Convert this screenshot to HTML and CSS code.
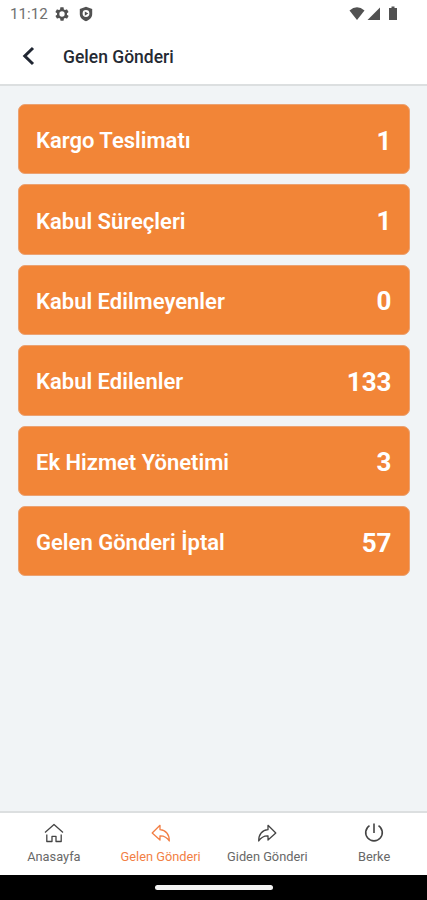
FILE: index.html
```html
<!DOCTYPE html>
<html lang="tr">
<head>
  <meta charset="UTF-8" />
  <meta name="viewport" content="width=device-width, initial-scale=1.0"/>
  <title>Gelen Gönderi</title>
  <link rel="stylesheet" href="styles.css">
</head>
<body>
  <div class="statusbar">
    <span class="time">11:12</span>
    <svg class="gear" width="16" height="16" viewBox="0 0 24 24" fill="#515151"><path fill-rule="evenodd" d="M19.4 13c.1-.3.1-.7.1-1s0-.7-.1-1l2.1-1.6c.2-.2.2-.4.1-.6l-2-3.5c-.1-.2-.4-.3-.6-.2l-2.5 1c-.5-.4-1.1-.7-1.7-1l-.4-2.6c0-.3-.2-.5-.4-.5h-4c-.3 0-.5.2-.5.4l-.4 2.7c-.6.2-1.2.6-1.7 1l-2.5-1c-.2-.1-.5 0-.6.2l-2 3.5c-.1.2-.1.5.1.6L4.600 11c0 .3-.1.7-.1 1s0 .7.1 1l-2.100 1.600c-.2.2-.2.4-.1.6l2 3.500c.1.2.4.3.6.2l2.500-1c.5.4 1.100.7 1.700 1l.4 2.600c0 .3.2.5.5.5h4c.2 0 .4-.2.4-.5l.4-2.600c.6-.3 1.200-.6 1.700-1l2.500 1c.2.1.5 0 .6-.2l2-3.500c.1-.2.1-.5-.1-.6zM12 16a4 4 0 1 1 0-8 4 4 0 0 1 0 8z"/></svg>
    <svg class="shield" width="14" height="16" viewBox="0 0 14 16"><path fill="#515151" fill-rule="evenodd" d="M7 .8 13.200 3v5c0 3.500-2.600 6-6.200 7.300C3.400 14 .8 11.500.8 8V3zM7 4.100a3.400 3.400 0 1 0 0 6.800 3.400 3.400 0 0 0 0-6.800z"/><path fill="#515151" d="m5.800 5.500 3.500 2.100-3.500 2.100z"/></svg>
    <svg class="signals" width="49" height="16" viewBox="0 0 49 16" fill="#515151"><path d="M.5 4.600Q8-2 15.500 4.600L8 14z"/><path d="M31 1.500V14H18.500z"/><path d="M42.500.500h3V2H48v12h-8V2h2.500z"/></svg>
  </div>

  <header class="topbar">
    <svg width="14" height="20" viewBox="0 0 14 20" fill="none" stroke="#202632" stroke-width="3"><path d="m12 2-8.200 8 8.200 8"/></svg>
    <h1>Gelen Gönderi</h1>
  </header>

  <main class="list">
    <div class="card"><span>Kargo Teslimatı</span><b>1</b></div>
    <div class="card"><span>Kabul Süreçleri</span><b>1</b></div>
    <div class="card"><span>Kabul Edilmeyenler</span><b>0</b></div>
    <div class="card"><span>Kabul Edilenler</span><b>133</b></div>
    <div class="card"><span>Ek Hizmet Yönetimi</span><b>3</b></div>
    <div class="card"><span>Gelen Gönderi İptal</span><b>57</b></div>
  </main>

  <nav class="tabs">
    <div class="tab">
      <svg width="20" height="20" viewBox="0 0 20 20"><path d="m1 9.500 9-8 9 8M2.800 11.500v7H8v-5.200h4v5.200h5.200v-7"/></svg>
      <span>Anasayfa</span>
    </div>
    <div class="tab active">
      <svg width="20" height="20" viewBox="0 0 20 20"><path d="M9 2.300 1.200 10 9 17v-4.200c4-.2 6.500.8 9.300 5.200.2-6.500-3.600-11-9.300-11.300z"/></svg>
      <span>Gelen Gönderi</span>
    </div>
    <div class="tab">
      <svg width="20" height="20" viewBox="0 0 20 20"><path d="m11 2.300 7.800 7.700-7.800 7v-4.200c-4-.2-6.500.8-9.300 5.200-.2-6.500 3.600-11 9.300-11.300z"/></svg>
      <span>Giden Gönderi</span>
    </div>
    <div class="tab">
      <svg class="power" width="20" height="20" viewBox="0 0 20 20"><path d="M10 .5V10M5.500 2.600a8.300 8.300 0 1 0 9 0"/></svg>
      <span>Berke</span>
    </div>
  </nav>

  <div class="homebar"><div class="pill"></div></div>
</body>
</html>
```

FILE: styles.css
```css
* {
  box-sizing: border-box;
}

body {
  font-family: Roboto, sans-serif;
  background: #f1f4f6;
  display: flex;
  flex-direction: column;
  height: 900px;
  margin: 0;
  overflow: hidden;
}

.statusbar {
  display: flex;
  align-items: center;
  height: 28px;
  padding: 0 29px 0 10px;
  background: #fff;
}

.time {
  width: 44px;
  font-size: 15.2px;
  color: #707070;
}

.shield {
  margin-left: 9px;
}

.signals {
  margin-left: auto;
}

.topbar {
  display: flex;
  align-items: center;
  height: 58px;
  padding-left: 21px;
  background: #fff;
  border-bottom: 2px solid #dcdfe0;
}

.topbar h1 {
  margin: 1px 0 0 28px;
  font-size: 17.5px;
  font-weight: 500;
  color: #252a33;
}

.list {
  flex: 1;
  display: flex;
  flex-direction: column;
  gap: 10px;
  padding: 18px 17.5px 0 18px;
}

.card {
  display: flex;
  align-items: center;
  justify-content: space-between;
  height: 70.4px;
  padding: 3px 17px 0;
  border: 1px solid #eba272;
  border-radius: 7px;
  background: #f28537;
  color: #fff;
}

.card span {
  font-size: 22px;
  font-weight: 600;
}

.card b {
  font-size: 26px;
  font-weight: 700;
}

.tabs {
  display: flex;
  height: 64px;
  background: #fff;
  border-top: 2px solid #dcdfe0;
}

.tab {
  flex: 1;
  display: flex;
  flex-direction: column;
  align-items: center;
  padding: 10px 0 0 1px;
  font-size: 12.8px;
  line-height: 16px;
  color: #686868;
}

.tab svg {
  margin-bottom: 6px;
  fill: none;
  stroke: #444;
  stroke-width: 1.3;
  stroke-linejoin: round;
}

.tab.active {
  color: #f27f45;
}

.tab.active svg {
  stroke: #f27f45;
}

.tab .power {
  stroke-width: 1.6;
}

.homebar {
  display: flex;
  align-items: center;
  justify-content: center;
  height: 25px;
  background: #000;
}

.pill {
  width: 118px;
  height: 5px;
  border-radius: 3px;
  background: #f3f3f3;
}
```
